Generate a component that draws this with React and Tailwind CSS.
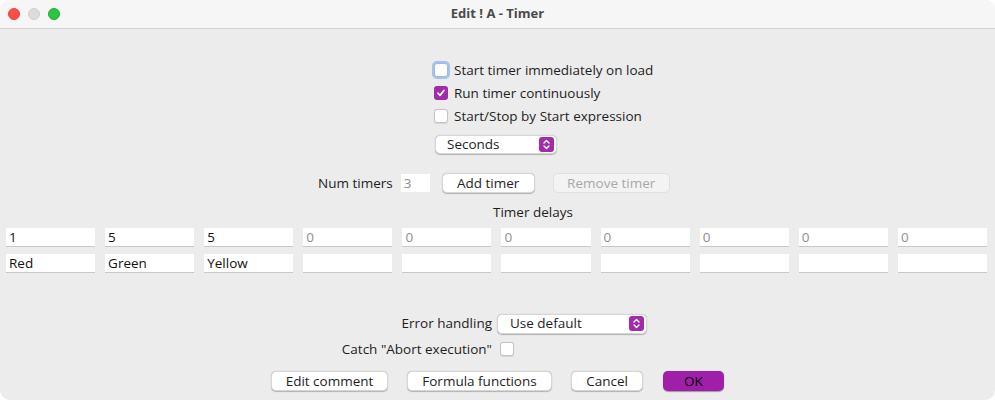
import React from 'react'

const font = { fontFamily: '"Open Sans", "DejaVu Sans", sans-serif' }

function Checkbox({ checked, focused }) {
  if (checked) {
    return (
      <span className="flex h-[14px] w-[14px] items-center justify-center rounded-[3px] bg-[#a22ba9]">
        <svg width="10" height="10" viewBox="0 0 10 10" fill="none">
          <path d="M2 5.2l2 2.2 4-5" stroke="white" strokeWidth="1.7" strokeLinecap="round" strokeLinejoin="round" />
        </svg>
      </span>
    )
  }
  return (
    <span
      className={`block h-[14px] w-[14px] rounded-[3px] bg-white ${
        focused
          ? 'border border-[#9fb9e0] shadow-[0_0_0_2px_rgba(110,160,230,0.55)]'
          : 'border border-[#c4c4c4] shadow-[0_0.5px_1px_rgba(0,0,0,0.1)]'
      }`}
    />
  )
}

function Stepper() {
  return (
    <span className="flex h-[15px] w-[15px] items-center justify-center rounded-[3px] bg-[#a22ba9]">
      <svg width="9" height="11" viewBox="0 0 9 11" fill="none">
        <path d="M2 4l2.5-2.5L7 4M2 7l2.5 2.5L7 7" stroke="white" strokeWidth="1.4" strokeLinecap="round" strokeLinejoin="round" />
      </svg>
    </span>
  )
}

function Button({ children, className = '', disabled, primary }) {
  return (
    <div
      className={`flex h-[20px] items-center justify-center rounded-[5px] text-[13.5px] ${
        primary
          ? 'bg-[#a01fa8] text-black shadow-[0_0.5px_1px_rgba(0,0,0,0.35)]'
          : disabled
          ? 'bg-[#f3f3f3] text-[#a8a8a8] border border-[#e0e0e0]'
          : 'bg-white text-[#1e1e1e] border border-[#d6d6d6] shadow-[0_0.5px_1px_rgba(0,0,0,0.25)]'
      } ${className}`}
    >
      {children}
    </div>
  )
}

function Field({ value, dim }) {
  return (
    <div className="flex h-[19px] items-center border-b border-[#c8c8c8] bg-white pl-[3px] text-[13.5px]">
      <span className={dim ? 'text-[#8f8f8f]' : 'text-[#111]'}>{value}</span>
    </div>
  )
}

export default function App() {
  const delays = ['1', '5', '5', '0', '0', '0', '0', '0', '0', '0']
  const names = ['Red', 'Green', 'Yellow', '', '', '', '', '', '', '']

  return (
    <div className="h-[400px] w-[995px] bg-white" style={font}>
      <div className="flex h-[400px] flex-col overflow-hidden rounded-[10px] bg-[#ececec] text-[13.5px] text-[#1e1e1e]">
        <div className="relative flex h-[29px] shrink-0 items-center justify-center border-b border-[#d0d0d0] bg-[#f6f6f6]">
          <div className="absolute left-[8px] top-[8px] flex gap-[8px]">
            <span className="h-[12px] w-[12px] rounded-full bg-[#fe4d45] border border-[#e0443e]" />
            <span className="h-[12px] w-[12px] rounded-full bg-[#dcdcdc] border border-[#cfcfcf]" />
            <span className="h-[12px] w-[12px] rounded-full bg-[#29c73f] border border-[#22a835]" />
          </div>
          <span className="text-[13px] font-bold text-[#4a4a4a]">Edit ! A - Timer</span>
        </div>

        <div className="ml-[434px] mt-[34px] flex flex-col gap-[9px]">
          <div className="flex h-[14px] items-center gap-[6px]">
            <Checkbox focused />
            <span>Start timer immediately on load</span>
          </div>
          <div className="flex h-[14px] items-center gap-[6px]">
            <Checkbox checked />
            <span>Run timer continuously</span>
          </div>
          <div className="flex h-[14px] items-center gap-[6px]">
            <Checkbox />
            <span>Start/Stop by Start expression</span>
          </div>
        </div>

        <div className="ml-[435px] mt-[12px] flex h-[19px] w-[122px] items-center justify-between rounded-[5px] border border-[#d6d6d6] bg-white pl-[11px] pr-[2px] shadow-[0_0.5px_1px_rgba(0,0,0,0.25)]">
          <span>Seconds</span>
          <Stepper />
        </div>

        <div className="ml-[318px] mt-[19px] flex h-[20px] items-center">
          <span>Num timers</span>
          <div className="ml-[8px] flex h-[18px] w-[29px] items-center bg-white pl-[3px] text-[#8f8f8f]">3</div>
          <Button className="ml-[12px] w-[93px]">Add timer</Button>
          <Button className="ml-[18px] w-[117px]" disabled>Remove timer</Button>
        </div>

        <div className="ml-[493px] mt-[10px] h-[18px] leading-[18px]">Timer delays</div>

        <div className="mt-[7px] grid grid-cols-10 gap-x-[10px] gap-y-[7px] pl-[6px] pr-[8px]">
          {delays.map((d, i) => (
            <Field key={`d${i}`} value={d} dim={i > 2} />
          ))}
          {names.map((n, i) => (
            <Field key={`n${i}`} value={n} />
          ))}
        </div>

        <div className="mt-[40px] flex h-[21px] items-center">
          <span className="w-[492px] text-right">Error handling</span>
          <div className="ml-[5px] flex h-[20px] w-[150px] items-center justify-between rounded-[5px] border border-[#d6d6d6] bg-white pl-[12px] pr-[2px] shadow-[0_0.5px_1px_rgba(0,0,0,0.25)]">
            <span>Use default</span>
            <Stepper />
          </div>
        </div>

        <div className="mt-[6px] flex h-[18px] items-center">
          <span className="w-[492px] text-right">Catch "Abort execution"</span>
          <span className="ml-[8px]">
            <Checkbox />
          </span>
        </div>

        <div className="ml-[271px] mt-[13px] flex items-center">
          <Button className="w-[117px]">Edit comment</Button>
          <Button className="ml-[19px] w-[145px]">Formula functions</Button>
          <Button className="ml-[19px] w-[72px]">Cancel</Button>
          <Button className="ml-[20px] w-[61px]" primary>OK</Button>
        </div>
      </div>
    </div>
  )
}
